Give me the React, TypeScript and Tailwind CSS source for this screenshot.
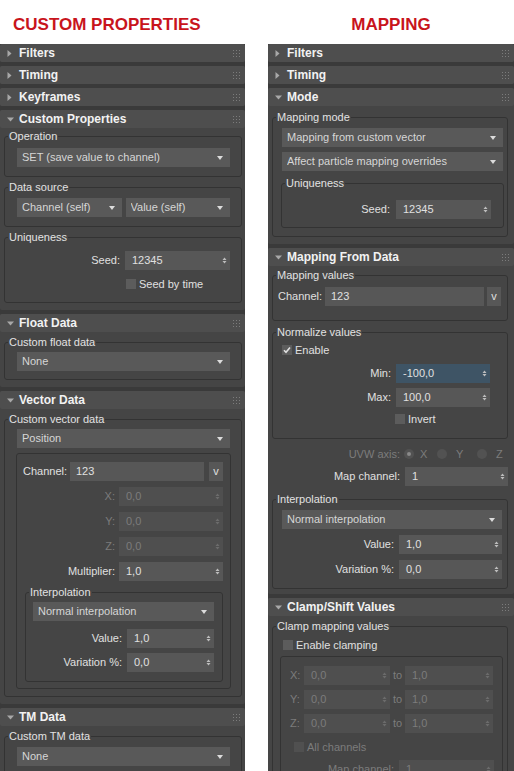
import React from "react";

const Arrow = ({ open }: { open: boolean }) =>
  open ? (
    <svg width="7" height="5" viewBox="0 0 7 5">
      <path d="M0 0.5H7L3.5 4.5Z" fill="#a8a8a8" />
    </svg>
  ) : (
    <svg width="5" height="7" viewBox="0 0 5 7">
      <path d="M0.5 0V7L4.5 3.5Z" fill="#a8a8a8" />
    </svg>
  );

const Grip = () => (
  <svg width="7" height="7" viewBox="0 0 7 7">
    {[0, 3, 6].flatMap((x) =>
      [0, 3, 6].map((y) => <rect key={`${x}-${y}`} x={x} y={y} width="1" height="1" fill="#7c7c7c" />)
    )}
  </svg>
);

function Rollout({ title, open = false, children }: { title: string; open?: boolean; children?: React.ReactNode }) {
  return (
    <div className="mb-[4px] bg-[#454545] rounded-[2px]">
      <div className="h-[18px] flex items-center bg-[#4e4e4e] rounded-[2px] pl-[7px] pr-[5px]">
        <span className="w-[12px] flex items-center">
          <Arrow open={open} />
        </span>
        <span className="flex-1 text-[12px] font-bold text-[#f2f2f2] leading-none">{title}</span>
        <Grip />
      </div>
      {open && children}
    </div>
  );
}

function Group({ label, className = "", children }: { label?: string; className?: string; children?: React.ReactNode }) {
  return (
    <div className={"relative border border-[#333333] rounded-[3px] " + className}>
      {label && (
        <span className="absolute left-[3px] -top-[8px] px-[1px] bg-[#454545] text-[11px] leading-[14px] text-[#e2e2e2] whitespace-nowrap">
          {label}
        </span>
      )}
      {children}
    </div>
  );
}

function Dropdown({ text, className = "" }: { text: string; className?: string }) {
  return (
    <div className={"h-[19px] bg-[#595959] flex items-center pl-[5px] pr-[7px] text-[11px] text-[#d6d6d6] " + className}>
      <span className="flex-1 truncate">{text}</span>
      <svg width="6" height="4" viewBox="0 0 6 4">
        <path d="M0 0H6L3 4Z" fill="#dcdcdc" />
      </svg>
    </div>
  );
}

function Spin({
  value,
  className = "",
  disabled = false,
  hl = false,
}: {
  value: string;
  className?: string;
  disabled?: boolean;
  hl?: boolean;
}) {
  return (
    <div
      className={`h-[19px] flex items-center pl-[7px] pr-[3px] text-[11px] ${
        hl ? "bg-[#3e5465]" : disabled ? "bg-[#4f4f4f]" : "bg-[#575757]"
      } ${disabled ? "text-[#7c7c7c]" : "text-[#e0e0e0]"} ${className}`}
    >
      <span className="flex-1">{value}</span>
      <svg width="5" height="9" viewBox="0 0 5 9">
        <path d="M0.5 4L2.5 1.5L4.5 4Z M0.5 5H4.5L2.5 7.5Z" fill={disabled ? "#6c6c6c" : "#bdbdbd"} />
      </svg>
    </div>
  );
}

function Row({
  label,
  className = "",
  disabled = false,
  gap = "gap-[4px]",
  children,
}: {
  label: string;
  className?: string;
  disabled?: boolean;
  gap?: string;
  children?: React.ReactNode;
}) {
  return (
    <div className={`flex justify-end items-center ${gap} ${className}`}>
      <span className={`text-[11px] ${disabled ? "text-[#7c7c7c]" : "text-[#e0e0e0]"}`}>{label}</span>
      {children}
    </div>
  );
}

function Check({ checked = false, disabled = false }: { checked?: boolean; disabled?: boolean }) {
  return (
    <span className={`w-[10px] h-[10px] flex items-center justify-center ${disabled ? "bg-[#505050]" : "bg-[#5c5c5c]"}`}>
      {checked && (
        <svg width="8" height="8" viewBox="0 0 8 8">
          <path d="M1 4.2L3 6.3L7 1.5" stroke="#e0e0e0" strokeWidth="1.6" fill="none" />
        </svg>
      )}
    </span>
  );
}

function Radio({ on = false }: { on?: boolean }) {
  return (
    <span className="w-[10px] h-[10px] rounded-full bg-[#525252] flex items-center justify-center">
      {on && <span className="w-[4px] h-[4px] rounded-full bg-[#8a8a8a]" />}
    </span>
  );
}

function ChannelRow({ labelW, gapClass, className = "" }: { labelW: string; gapClass: string; className?: string }) {
  return (
    <div className={"flex items-center h-[19px] " + className}>
      <span className={`${labelW} text-[11px] text-[#e0e0e0]`}>Channel:</span>
      <div className="flex-1 h-[19px] bg-[#575757] flex items-center pl-[6px] text-[11px] text-[#e0e0e0]">123</div>
      <div className={`${gapClass} w-[14px] h-[19px] bg-[#575757] flex items-center justify-center text-[11px] text-[#e0e0e0]`}>
        v
      </div>
    </div>
  );
}

export default function App() {
  return (
    <div className="w-[514px] h-[771px] overflow-hidden bg-white font-['Liberation_Sans',Arial,sans-serif]">
      <div className="h-[44px] flex items-center">
        <div className="w-[245px] pl-[13px] pt-[4px] text-[17px] font-bold text-[#c8141c] leading-none">CUSTOM PROPERTIES</div>
        <div className="w-[246px] ml-[23px] pt-[4px] text-center text-[17px] font-bold text-[#c8141c] leading-none">MAPPING</div>
      </div>
      <div className="flex items-start">
        {/* LEFT */}
        <div className="w-[245px] h-[727px] bg-[#3a3a3a]">
          <Rollout title="Filters" />
          <Rollout title="Timing" />
          <Rollout title="Keyframes" />
          <Rollout title="Custom Properties" open>
            <div className="pt-[8px] pb-[7px] pl-[4px] pr-[3px]">
              <Group label="Operation" className="pt-[11px] pb-[9px] pl-[12px] pr-[11px]">
                <Dropdown text="SET (save value to channel)" />
              </Group>
              <Group label="Data source" className="mt-[10px] pt-[10px] pb-[9px] pl-[12px] pr-[11px]">
                <div className="flex gap-[4px]">
                  <Dropdown className="flex-1" text="Channel (self)" />
                  <Dropdown className="flex-1" text="Value (self)" />
                </div>
              </Group>
              <Group label="Uniqueness" className="mt-[10px] pt-[13px] pb-[10px] pl-[12px] pr-[11px]">
                <Row label="Seed:" gap="gap-[5px]">
                  <Spin value="12345" className="w-[105px]" />
                </Row>
                <div className="mt-[6px] h-[16px] flex items-center pl-[109px]">
                  <Check />
                  <span className="ml-[3px] text-[11px] text-[#e0e0e0]">Seed by time</span>
                </div>
              </Group>
            </div>
          </Rollout>
          <Rollout title="Float Data" open>
            <div className="pt-[10px] pb-[7px] pl-[4px] pr-[3px]">
              <Group label="Custom float data" className="pt-[9px] pb-[8px] pl-[12px] pr-[11px]">
                <Dropdown text="None" />
              </Group>
            </div>
          </Rollout>
          <Rollout title="Vector Data" open>
            <div className="pt-[10px] pb-[7px] pl-[4px] pr-[3px]">
              <Group label="Custom vector data" className="pt-[9px] pb-[7px] pl-[12px] pr-[11px]">
                <Dropdown text="Position" />
                <Group className="mt-[5px] -mx-[1px] pt-[8px] pb-[6px] pl-[6px] pr-[7px]">
                  <ChannelRow labelW="w-[47px]" gapClass="ml-[5px]" />
                  <Row label="X:" disabled className="mt-[6px]">
                    <Spin value="0,0" disabled className="w-[104px]" />
                  </Row>
                  <Row label="Y:" disabled className="mt-[6px]">
                    <Spin value="0,0" disabled className="w-[104px]" />
                  </Row>
                  <Row label="Z:" disabled className="mt-[6px]">
                    <Spin value="0,0" disabled className="w-[104px]" />
                  </Row>
                  <Row label="Multiplier:" className="mt-[6px]">
                    <Spin value="1,0" className="w-[104px]" />
                  </Row>
                  <Group label="Interpolation" className="mt-[11px] ml-[2px] pt-[9px] pb-[9px] pl-[7px] pr-[8px]">
                    <Dropdown text="Normal interpolation" />
                    <Row label="Value:" className="mt-[8px]" gap="gap-[5px]">
                      <Spin value="1,0" className="w-[87px]" />
                    </Row>
                    <Row label="Variation %:" className="mt-[5px]" gap="gap-[5px]">
                      <Spin value="0,0" className="w-[87px]" />
                    </Row>
                  </Group>
                </Group>
              </Group>
            </div>
          </Rollout>
          <Rollout title="TM Data" open>
            <div className="pt-[10px] pl-[4px] pr-[3px]">
              <Group label="Custom TM data" className="pt-[10px] pb-[8px] pl-[12px] pr-[11px]">
                <Dropdown text="None" />
              </Group>
            </div>
          </Rollout>
        </div>

        {/* RIGHT */}
        <div className="w-[246px] ml-[23px] h-[727px] bg-[#3a3a3a]">
          <Rollout title="Filters" />
          <Rollout title="Timing" />
          <Rollout title="Mode" open>
            <div className="pt-[11px] pb-[7px] pl-[4px] pr-[6px]">
              <Group label="Mapping mode" className="pt-[10px] pb-[8px] pl-[9px] pr-[4px]">
                <Dropdown text="Mapping from custom vector" />
                <Dropdown className="mt-[5px]" text="Affect particle mapping overrides" />
                <Group label="Uniqueness" className="mt-[12px] -mx-[1px] pt-[16px] pb-[8px] pr-[12px]">
                  <Row label="Seed:" gap="gap-[6px]">
                    <Spin value="12345" className="w-[95px]" />
                  </Row>
                </Group>
              </Group>
            </div>
          </Rollout>
          <Rollout title="Mapping From Data" open>
            <div className="pt-[9px] pb-[5px] pl-[4px] pr-[6px]">
              <Group label="Mapping values" className="pt-[11px] pb-[14px] pl-[5px] pr-[6px]">
                <ChannelRow labelW="w-[47px]" gapClass="ml-[3px]" />
              </Group>
              <Group label="Normalize values" className="mt-[11px] pt-[10px] pb-[12px] pl-[9px] pr-[17px]">
                <div className="h-[14px] flex items-center">
                  <Check checked />
                  <span className="ml-[3px] text-[11px] text-[#e0e0e0]">Enable</span>
                </div>
                <Row label="Min:" className="mt-[7px]" gap="gap-[5px]">
                  <Spin hl value="-100,0" className="w-[94px]" />
                </Row>
                <Row label="Max:" className="mt-[5px]" gap="gap-[5px]">
                  <Spin value="100,0" className="w-[94px]" />
                </Row>
                <div className="mt-[5px] h-[14px] flex items-center pl-[113px]">
                  <Check />
                  <span className="ml-[3px] text-[11px] text-[#e0e0e0]">Invert</span>
                </div>
              </Group>
              <div className="mt-[8px] h-[14px] flex items-center text-[11px] text-[#7c7c7c]">
                <span className="w-[128px] text-right">UVW axis:</span>
                <span className="ml-[4px] w-[33px] flex items-center">
                  <Radio on />
                  <span className="ml-[6px]">X</span>
                </span>
                <span className="w-[40px] flex items-center">
                  <Radio />
                  <span className="ml-[9px]">Y</span>
                </span>
                <span className="flex items-center">
                  <Radio />
                  <span className="ml-[9px]">Z</span>
                </span>
              </div>
              <Row label="Map channel:" className="mt-[6px]" gap="gap-[5px]">
                <Spin value="1" className="w-[103px]" />
              </Row>
              <Group label="Interpolation" className="mt-[13px] pt-[10px] pb-[9px] pl-[9px] pr-[5px]">
                <Dropdown text="Normal interpolation" />
                <Row label="Value:" className="mt-[6px]" gap="gap-[5px]">
                  <Spin value="1,0" className="w-[103px]" />
                </Row>
                <Row label="Variation %:" className="mt-[6px]" gap="gap-[5px]">
                  <Spin value="0,0" className="w-[103px]" />
                </Row>
              </Group>
            </div>
          </Rollout>
          <Rollout title="Clamp/Shift Values" open>
            <div className="pt-[10px] pl-[4px] pr-[6px]">
              <Group label="Clamp mapping values" className="pt-[11px] pb-[10px] pl-[10px] pr-[4px]">
                <div className="h-[14px] flex items-center">
                  <Check />
                  <span className="ml-[3px] text-[11px] text-[#e0e0e0]">Enable clamping</span>
                </div>
                <Group className="mt-[4px] -ml-[3px] pt-[9px] pb-[10px] pl-[9px] pr-[8px]">
                  {["X:", "Y:", "Z:"].map((l, i) => (
                    <div key={l} className={`flex items-center h-[19px] text-[11px] text-[#7c7c7c] ${i > 0 ? "mt-[5px]" : ""}`}>
                      <span className="w-[14px]">{l}</span>
                      <Spin value="0,0" disabled className="w-[86px]" />
                      <span className="w-[15px] text-center">to</span>
                      <Spin value="1,0" disabled className="w-[88px]" />
                    </div>
                  ))}
                  <div className="mt-[7px] h-[14px] flex items-center pl-[4px]">
                    <Check disabled />
                    <span className="ml-[3px] text-[11px] text-[#7c7c7c]">All channels</span>
                  </div>
                  <Row label="Map channel:" disabled className="mt-[6px]" gap="gap-[5px]">
                    <Spin value="1" disabled className="w-[95px]" />
                  </Row>
                </Group>
              </Group>
            </div>
          </Rollout>
        </div>
      </div>
    </div>
  );
}
